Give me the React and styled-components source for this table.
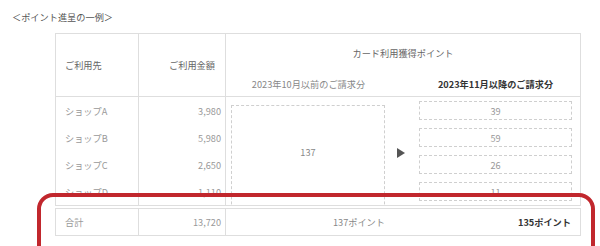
import React from "react";
import styled, { createGlobalStyle } from "styled-components";

const Global = createGlobalStyle`
  html, body { margin: 0; padding: 0; background: #fff; }
  body { font-family: "Noto Sans CJK JP", "Noto Sans", sans-serif; font-size: 9.2px; color: #888; }
`;

const Page = styled.div`
  position: relative;
  width: 600px;
  height: 246px;
  overflow: hidden;
  padding-top: 11px;
  box-sizing: border-box;
`;

const Title = styled.div`
  padding-left: 12px;
  line-height: 12px;
  color: #555;
`;

const Frame = styled.div`
  margin: 10px 0 0 55px;
  width: 526px;
`;

const Grid = styled.div`
  display: grid;
  grid-template-columns: 83px 87px 1fr;
  border: 1px solid #dedede;
  box-sizing: border-box;
  height: ${(p) => p.$h}px;
  ${(p) => (p.$open ? "border-top: none;" : "")}
  overflow: hidden;
  margin-top: ${(p) => p.$mt || 0}px;
`;

const Cell = styled.div`
  display: flex;
  align-items: center;
  justify-content: ${(p) => (p.$right ? "flex-end" : "flex-start")};
  padding: ${(p) => (p.$right ? `0 ${p.$pr ?? 4}px 0 0` : "0 0 0 9px")};
  border-right: 1px solid #dedede;
  color: ${(p) => p.$c || "#999"};
  white-space: nowrap;
`;

const Column = styled.div`
  display: flex;
  flex-direction: column;
  border-right: 1px solid #dedede;
`;

const Line = styled.div`
  height: 27px;
  flex: none;
  display: flex;
  align-items: center;
  justify-content: ${(p) => (p.$right ? "flex-end" : "flex-start")};
  padding: ${(p) => (p.$right ? "0 4px 0 0" : "0 0 0 9px")};
  color: #999;
  white-space: nowrap;
`;

const PointHead = styled.div`
  display: flex;
  flex-direction: column;
`;

const PointTitle = styled.div`
  height: 38px;
  display: flex;
  align-items: center;
  justify-content: center;
  color: #666;
`;

const Sub = styled.div`
  display: grid;
  grid-template-columns: 165px 20px 1fr;
  height: ${(p) => p.$h}px;
`;

const SubLabel = styled.div`
  display: flex;
  align-items: center;
  justify-content: ${(p) => (p.$right ? "flex-end" : "center")};
  padding: ${(p) => p.$pad || "0"};
  color: ${(p) => (p.$strong ? "#333" : "#888")};
  font-weight: ${(p) => (p.$strong ? 700 : 400)};
  white-space: nowrap;
`;

const OldCol = styled.div`
  padding: 8px 6px 0 5px;
`;

const BigBox = styled.div`
  height: 140px;
  border: 1px dashed #cfcfcf;
  box-sizing: border-box;
  padding-top: 40px;
  line-height: 12px;
  text-align: center;
  color: #888;
`;

const ArrowCol = styled.div`
  padding-top: 8px;
  height: 103px;
  box-sizing: border-box;
  display: flex;
  align-items: center;
  justify-content: center;
`;

const NewCol = styled.div`
  display: flex;
  flex-direction: column;
  gap: 8px;
  padding: 4px 8px 0 8px;
`;

const SmallBox = styled.div`
  height: 19px;
  flex: none;
  border: 1px dashed #cfcfcf;
  box-sizing: border-box;
  display: flex;
  align-items: center;
  justify-content: center;
  color: #999;
`;

const Highlight = styled.div`
  position: absolute;
  left: 37px;
  top: 193px;
  width: 558px;
  height: 90px;
  border: 4px solid #c1272d;
  border-radius: 16px;
  box-sizing: border-box;
`;

const rows = [
  { shop: "ショップA", amount: "3,980", pt: "39" },
  { shop: "ショップB", amount: "5,980", pt: "59" },
  { shop: "ショップC", amount: "2,650", pt: "26" },
  { shop: "ショップD", amount: "1,110", pt: "11" },
];

export default function App() {
  return (
    <Page>
      <Global />
      <Title>＜ポイント進呈の一例＞</Title>
      <Frame>
        <Grid $h={64}>
          <Cell $c="#666">ご利用先</Cell>
          <Cell $right $pr={10} $c="#666">ご利用金額</Cell>
          <PointHead>
            <PointTitle>カード利用獲得ポイント</PointTitle>
            <Sub $h={24}>
              <SubLabel>2023年10月以前のご請求分</SubLabel>
              <div />
              <SubLabel $strong>2023年11月以降のご請求分</SubLabel>
            </Sub>
          </PointHead>
        </Grid>
        <Grid $h={109} $open>
          <Column>
            {rows.map((r) => (
              <Line key={r.shop}>{r.shop}</Line>
            ))}
          </Column>
          <Column>
            {rows.map((r) => (
              <Line key={r.shop} $right>
                {r.amount}
              </Line>
            ))}
          </Column>
          <Sub $h={108}>
            <OldCol>
              <BigBox>137</BigBox>
            </OldCol>
            <ArrowCol>
              <svg width="8" height="10" viewBox="0 0 8 10">
                <polygon points="0,0 8,5 0,10" fill="#555" />
              </svg>
            </ArrowCol>
            <NewCol>
              {rows.map((r) => (
                <SmallBox key={r.shop}>{r.pt}</SmallBox>
              ))}
            </NewCol>
          </Sub>
        </Grid>
        <Grid $h={28} $mt={2}>
          <Cell>合計</Cell>
          <Cell $right>13,720</Cell>
          <Sub $h={26}>
            <SubLabel $right $pad="0 6px 0 0">137ポイント</SubLabel>
            <div />
            <SubLabel $right $strong $pad="0 9px 0 0">135ポイント</SubLabel>
          </Sub>
        </Grid>
      </Frame>
      <Highlight />
    </Page>
  );
}
